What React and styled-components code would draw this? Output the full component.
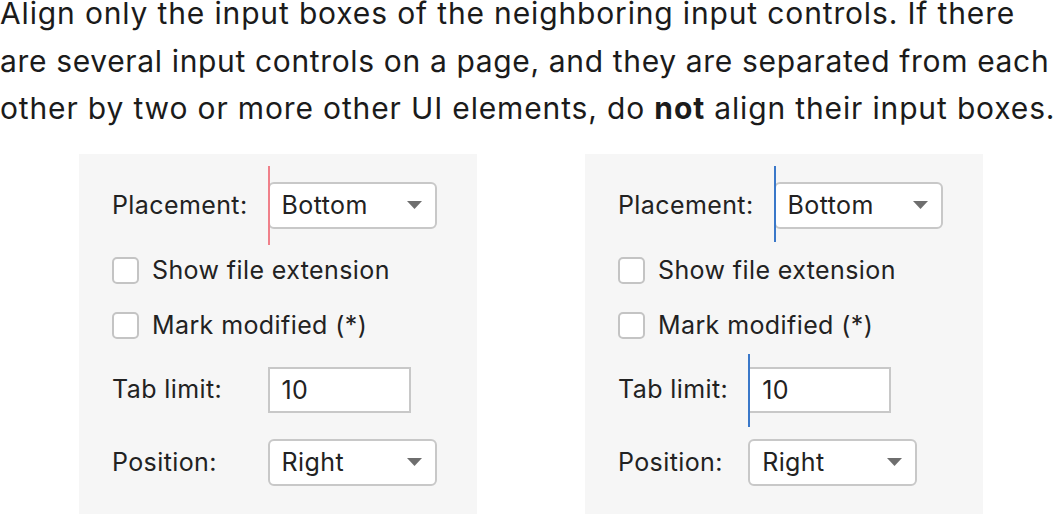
import React from 'react';
import styled, { createGlobalStyle } from 'styled-components';

const GlobalStyle = createGlobalStyle`
  html, body {
    margin: 0;
    padding: 0;
    background: #ffffff;
    overflow: hidden;
  }
  body {
    font-family: Inter, "Noto Sans", sans-serif;
    color: #1d1d1f;
  }
`;

const Page = styled.div`
  width: 1056px;
  height: 514px;
  overflow: hidden;
`;

const Lead = styled.p`
  margin: -10px 0 0;
  font-size: 30px;
  line-height: 47.5px;
  color: #1b1b1b;
  white-space: nowrap;

  strong {
    font-weight: 700;
  }
`;

const Line = styled.span`
  display: block;
  letter-spacing: ${(p) => p.$track}px;
`;

const Examples = styled.div`
  display: flex;
  gap: 108px;
  padding-left: 79px;
  margin-top: 21px;
`;

const Panel = styled.div`
  width: 398px;
  height: 380px;
  box-sizing: border-box;
  background: #f6f6f6;
  padding: 28px 0 0 33px;
  display: flex;
  flex-direction: column;
  gap: 28px;
  font-size: 25px;
  letter-spacing: 0.4px;
  color: #222222;
`;

const Form = styled.div`
  position: relative;
  display: grid;
  grid-template-columns: max-content max-content;
  column-gap: 20px;
  row-gap: 28px;
  align-items: center;
`;

const Label = styled.span`
  line-height: 30px;
`;

const Guide = styled.span`
  position: absolute;
  grid-column: 2;
  grid-row: 1 / -1;
  left: 0;
  top: ${(p) => -p.$above}px;
  bottom: ${(p) => -p.$below}px;
  width: 2px;
  background: ${(p) => p.$color};
  z-index: 1;
`;

const Select = styled.div`
  width: 169px;
  height: 47px;
  box-sizing: border-box;
  border: 2px solid #c8c8c8;
  border-radius: 6px;
  background: #ffffff;
  padding: 0 13px 0 12px;
  display: flex;
  align-items: center;
  justify-content: space-between;
`;

const TextBox = styled.div`
  width: 143px;
  height: 46px;
  margin-bottom: -2px;
  box-sizing: border-box;
  border: 2px solid #c8c8c8;
  background: #ffffff;
  padding: 0 12px;
  display: flex;
  align-items: center;
`;

const Check = styled.label`
  grid-column: 1 / -1;
  display: flex;
  align-items: center;
  gap: 13px;
  height: 27px;
`;

const Box = styled.span`
  width: 27px;
  height: 27px;
  box-sizing: border-box;
  border: 2px solid #c4c4c4;
  border-radius: 5px;
  background: #ffffff;
  flex: none;
`;

const Arrow = () => (
  <svg width="15" height="8" viewBox="0 0 15 8">
    <path d="M0 0 H15 L7.5 8 Z" fill="#6e6e6e" />
  </svg>
);

const Dropdown = ({ value }) => (
  <Select>
    <span>{value}</span>
    <Arrow />
  </Select>
);

const CheckRow = ({ children }) => (
  <Check>
    <Box />
    <span>{children}</span>
  </Check>
);

export default function App() {
  return (
    <Page>
      <GlobalStyle />
      <Lead>
        <Line $track={0.85}>Align only the input boxes of the neighboring input controls. If there</Line>
        <Line $track={0.65}>are several input controls on a page, and they are separated from each</Line>
        <Line $track={0.85}>
          other by two or more other UI elements, do <strong>not</strong> align their input boxes.
        </Line>
      </Lead>
      <Examples>
        <Panel>
          <Form>
            <Label>Placement:</Label>
            <Dropdown value="Bottom" />
            <CheckRow>Show file extension</CheckRow>
            <CheckRow>Mark modified (*)</CheckRow>
            <Label>Tab limit:</Label>
            <TextBox>10</TextBox>
            <Label>Position:</Label>
            <Dropdown value="Right" />
            <Guide $color="#f0808a" $above={16} $below={16} />
          </Form>
        </Panel>
        <Panel>
          <Form>
            <Label>Placement:</Label>
            <Dropdown value="Bottom" />
            <Guide $color="#3a78c9" $above={16} $below={13} />
          </Form>
          <CheckRow>Show file extension</CheckRow>
          <CheckRow>Mark modified (*)</CheckRow>
          <Form>
            <Label>Tab limit:</Label>
            <TextBox>10</TextBox>
            <Label>Position:</Label>
            <Dropdown value="Right" />
            <Guide $color="#3a78c9" $above={13} $below={16} />
          </Form>
        </Panel>
      </Examples>
    </Page>
  );
}
